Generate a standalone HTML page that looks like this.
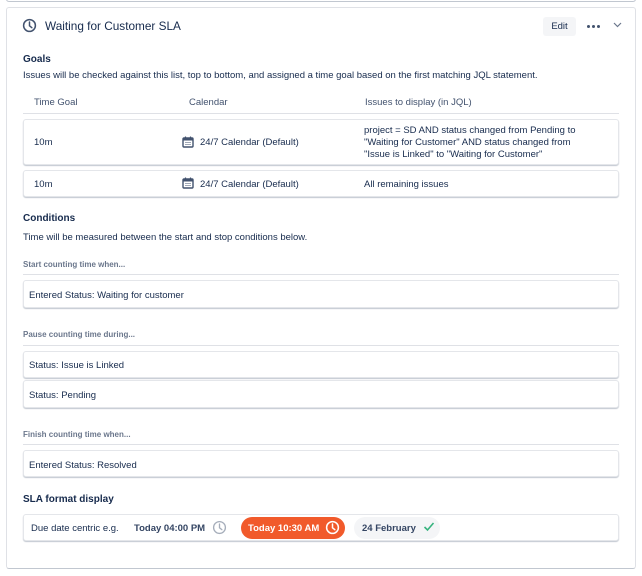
<!DOCTYPE html>
<html><head><style>
*{margin:0;padding:0;box-sizing:border-box}
body{width:642px;height:576px;background:#fff;font-family:"Liberation Sans",sans-serif;color:#172b4d;position:relative;overflow:hidden}
.a{position:absolute;white-space:nowrap}
.box{position:absolute;left:23px;width:596px;border:1px solid #e4e6ea;border-radius:3px;box-shadow:0 1px 1px #c1c7d0;background:#fff}
.t{font-size:9.5px}
.s{font-size:8px;color:#6b778c;font-weight:bold}
.h{font-size:10px;font-weight:bold}
.line{position:absolute;left:23px;width:596px;height:1px;background:#dfe1e6}
.dot{position:absolute;top:25px;width:3px;height:3px;border-radius:50%;background:#42526e}
</style></head><body>
<div style="position:absolute;left:6px;top:-4px;width:630px;height:6px;border:1px solid #c1c7d0;border-top:none;border-radius:0 0 3px 3px"></div>
<div style="position:absolute;left:6px;top:7px;width:630px;height:562px;border:1px solid #dfe1e6;border-bottom-color:#c1c7d0;border-radius:3px"></div>
<svg class="a" style="left:22px;top:18px" width="15" height="15" viewBox="0 0 16 16"><circle cx="8" cy="8" r="6.3" fill="none" stroke="#42526e" stroke-width="1.6"/><path d="M8 4.3V8.3L10.5 10.3" fill="none" stroke="#42526e" stroke-width="1.6" stroke-linecap="round"/></svg>
<div class="a" style="left:45px;top:19px;font-size:11.8px">Waiting for Customer SLA</div>
<div class="a" style="left:543px;top:17px;width:33px;height:19px;background:#f4f5f7;border-radius:3px;font-size:9.5px;line-height:19px;text-align:center">Edit</div>
<div class="dot" style="left:587px"></div><div class="dot" style="left:592px"></div><div class="dot" style="left:597px"></div>
<svg class="a" style="left:613px;top:22px" width="9" height="6" viewBox="0 0 9 6"><path d="M1 1L4.5 4.5L8 1" fill="none" stroke="#6b778c" stroke-width="1.2"/></svg>

<div class="a h" style="left:23px;top:54px">Goals</div>
<div class="a t" style="left:23px;top:70px">Issues will be checked against this list, top to bottom, and assigned a time goal based on the first matching JQL statement.</div>
<div class="a t" style="left:34px;top:97px;color:#42526e">Time Goal</div>
<div class="a t" style="left:189px;top:97px;color:#42526e">Calendar</div>
<div class="a t" style="left:365px;top:97px;color:#42526e">Issues to display (in JQL)</div>
<div class="line" style="top:113px"></div>
<div class="box" style="top:119px;height:46px"></div>
<div class="a t" style="left:34px;top:137px">10m</div>
<svg class="a" style="left:182px;top:136px" width="12" height="12" viewBox="0 0 12 12"><rect x="1" y="2" width="10" height="9" rx="1" fill="none" stroke="#42526e" stroke-width="1.4"/><rect x="1" y="2" width="10" height="2.5" fill="#42526e"/><path d="M3.5 0.5v2M8.5 0.5v2" stroke="#42526e" stroke-width="1.2"/><path d="M3.5 6.5h1M5.5 6.5h1M7.5 6.5h1M3.5 8.5h1M5.5 8.5h1M7.5 8.5h1" stroke="#42526e" stroke-width="1"/></svg>
<div class="a t" style="left:200px;top:137px">24/7 Calendar (Default)</div>
<div class="a t" style="left:364px;top:125px;line-height:12px">project = SD AND status changed from Pending to<br>"Waiting for Customer" AND status changed from<br>"Issue is Linked" to "Waiting for Customer"</div>
<div class="box" style="top:170px;height:27px"></div>
<div class="a t" style="left:34px;top:179px">10m</div>
<svg class="a" style="left:182px;top:177px" width="12" height="12" viewBox="0 0 12 12"><rect x="1" y="2" width="10" height="9" rx="1" fill="none" stroke="#42526e" stroke-width="1.4"/><rect x="1" y="2" width="10" height="2.5" fill="#42526e"/><path d="M3.5 0.5v2M8.5 0.5v2" stroke="#42526e" stroke-width="1.2"/><path d="M3.5 6.5h1M5.5 6.5h1M7.5 6.5h1M3.5 8.5h1M5.5 8.5h1M7.5 8.5h1" stroke="#42526e" stroke-width="1"/></svg>
<div class="a t" style="left:200px;top:179px">24/7 Calendar (Default)</div>
<div class="a t" style="left:364px;top:179px">All remaining issues</div>

<div class="a h" style="left:23px;top:213px">Conditions</div>
<div class="a t" style="left:23px;top:232px">Time will be measured between the start and stop conditions below.</div>
<div class="a s" style="left:23px;top:260px">Start counting time when...</div>
<div class="line" style="top:274px"></div>
<div class="box" style="top:280px;height:28px"></div>
<div class="a t" style="left:29px;top:290px">Entered Status: Waiting for customer</div>
<div class="a s" style="left:23px;top:330px">Pause counting time during...</div>
<div class="line" style="top:345px"></div>
<div class="box" style="top:351px;height:27px"></div>
<div class="a t" style="left:29px;top:360px">Status: Issue is Linked</div>
<div class="box" style="top:380px;height:28px"></div>
<div class="a t" style="left:29px;top:390px">Status: Pending</div>
<div class="a s" style="left:23px;top:430px">Finish counting time when...</div>
<div class="line" style="top:444px"></div>
<div class="box" style="top:450px;height:27px"></div>
<div class="a t" style="left:29px;top:460px">Entered Status: Resolved</div>

<div class="a h" style="left:23px;top:494px">SLA format display</div>
<div class="box" style="top:514px;height:27px"></div>
<div class="a t" style="left:31px;top:523px">Due date centric e.g.</div>
<div class="a t" style="left:134px;top:523px;font-weight:bold;color:#344563">Today 04:00 PM</div>
<svg class="a" style="left:212px;top:520px" width="15" height="15" viewBox="0 0 16 16"><circle cx="8" cy="8" r="6.3" fill="none" stroke="#a5adba" stroke-width="1.4"/><path d="M8 4.3V8.3L10.5 10.3" fill="none" stroke="#a5adba" stroke-width="1.4" stroke-linecap="round"/></svg>
<div class="a" style="left:241px;top:517px;width:104px;height:22px;background:#f15a2b;border-radius:11px"></div>
<div class="a t" style="left:248px;top:523px;font-weight:bold;color:#fff">Today 10:30 AM</div>
<svg class="a" style="left:325px;top:520px" width="15" height="15" viewBox="0 0 16 16"><circle cx="8" cy="8" r="6.3" fill="none" stroke="#fff" stroke-width="1.6"/><path d="M8 4.3V8.3L10.5 10.3" fill="none" stroke="#fff" stroke-width="1.6" stroke-linecap="round"/></svg>
<div class="a" style="left:354px;top:517px;width:86px;height:22px;background:#f4f5f7;border-radius:11px"></div>
<div class="a t" style="left:362px;top:523px;font-weight:bold;color:#344563">24 February</div>
<svg class="a" style="left:423px;top:521px" width="12" height="11" viewBox="0 0 12 11"><path d="M1.5 6L4.5 9L10.5 2" fill="none" stroke="#36b37e" stroke-width="1.6"/></svg>
</body></html>
